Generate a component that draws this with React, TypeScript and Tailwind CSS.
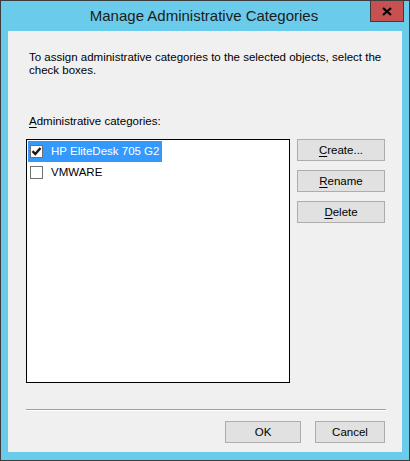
function App() {
  const font = { fontFamily: '"Liberation Sans", Arial, sans-serif' }

  return (
    <main className="h-[461px] w-[410px] bg-[#3c3c3c] p-px" style={font}>
      <div className="relative flex h-full flex-col bg-[#6bcbea] px-[7px] pb-[8px]">
        <div className="flex h-[30px] items-center justify-center pr-[2px] text-[15px] text-[#1b1b1b]">
          Manage Administrative Categories
        </div>
        <button className="absolute right-[5px] top-[-1px] flex h-[22px] w-[34px] items-center justify-center border border-[#3c3c3c] bg-[#c75050]">
          <svg width="10" height="9" viewBox="0 0 10 9">
            <path d="M1 1 L9 8 M9 1 L1 8" stroke="#000" strokeWidth="2.2" />
          </svg>
        </button>

        <div className="flex flex-1 flex-col bg-[#f0f0f0] pl-[18px] pr-[16px] text-[11.5px] leading-[13px] text-black">
          <p className="ml-[3px] mt-[20px] whitespace-nowrap">
            To assign administrative categories to the selected objects, select the
            <br />
            check boxes.
          </p>

          <p className="ml-[3px] mt-[38px]">
            <span className="underline underline-offset-2">A</span>dministrative categories:
          </p>

          <div className="mt-[11px] flex gap-[7px]">
            <div className="h-[244px] w-[264px] border border-black bg-white pl-px pt-px">
              <Row label="HP EliteDesk 705 G2" checked selected />
              <Row label="VMWARE" />
            </div>

            <div className="flex flex-col gap-[9px]">
              <WinButton keyChar="C" rest="reate..." className="w-[88px]" />
              <WinButton keyChar="R" rest="ename" className="w-[88px]" />
              <WinButton keyChar="D" rest="elete" className="w-[88px]" />
            </div>
          </div>

          <div className="mt-[26px] w-[360px] border-b border-t border-b-white border-t-[#a0a0a0]" />

          <div className="mt-[10px] flex justify-end gap-[14px] pr-px">
            <WinButton rest="OK" className="w-[76px] border-[#3c7fb1]" />
            <WinButton rest="Cancel" className="w-[70px]" />
          </div>
        </div>
      </div>
    </main>
  )
}

function Row({ label, checked, selected }: { label: string; checked?: boolean; selected?: boolean }) {
  return (
    <div className="flex h-[21px] items-center">
      <div className={`flex h-[21px] items-center pr-[3px] ${selected ? 'bg-[#3399ff] text-white' : 'text-black'}`}>
        <span className="ml-[2px] mr-[7px] flex h-[13px] w-[13px] items-center justify-center border border-[#707070] bg-white">
          {checked && (
            <svg width="11" height="11" viewBox="0 0 11 11">
              <path d="M1.5 5.2 L4.3 8 L9.5 2" fill="none" stroke="#1a1a1a" strokeWidth="2.4" />
            </svg>
          )}
        </span>
        <span className="pl-px">{label}</span>
      </div>
    </div>
  )
}

function WinButton({ keyChar, rest, className }: { keyChar?: string; rest: string; className?: string }) {
  return (
    <button className={`flex h-[22px] items-center justify-center border border-[#adadad] bg-[#e1e1e1] text-[11.5px] text-black ${className ?? ''}`}>
      {keyChar && <span className="underline underline-offset-2">{keyChar}</span>}
      {rest}
    </button>
  )
}

export default App
